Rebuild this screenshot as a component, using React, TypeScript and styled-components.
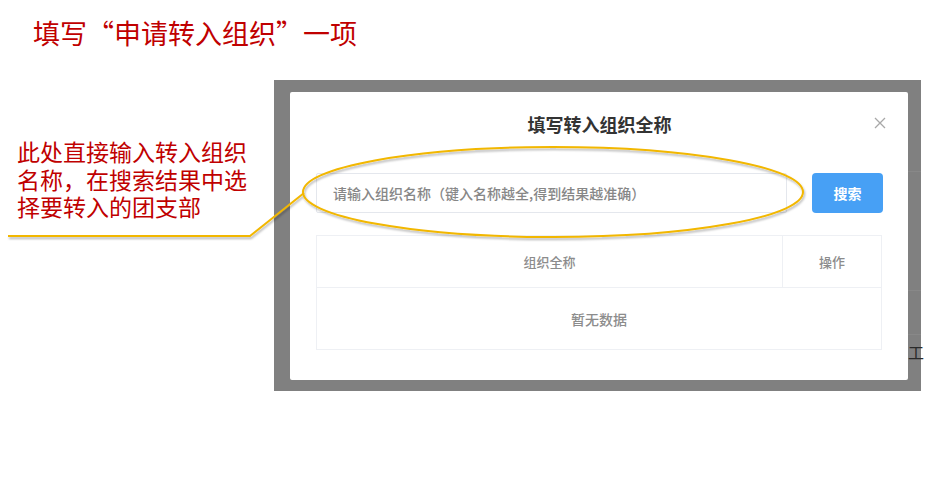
import styled, { createGlobalStyle } from 'styled-components';

const GlobalStyle = createGlobalStyle`
  html, body {
    margin: 0;
    padding: 0;
    background: #ffffff;
  }
  body {
    font-family: "Noto Sans CJK SC", "Noto Sans", sans-serif;
  }
`;

// slide page
const Page = styled.div`
  position: relative;
  width: 926px;
  height: 481px;
  overflow: hidden;
  background: #ffffff;
`;
const Heading = styled.h1`
  margin: 0;
  padding: 19px 0 0 33px;
  font-size: 27px;
  line-height: 28px;
  font-weight: 400;
  color: #c00000;
`;
const Body = styled.div`
  display: flex;
  margin-top: 33px;
`;
const Note = styled.div`
  width: 257px;
  padding: 58px 0 0 17px;
  display: flex;
  flex-direction: column;
`;
const NoteLine = styled.span`
  display: block;
  height: 27.5px;
  font-size: 23px;
  line-height: 27.5px;
  color: #c00000;
  white-space: nowrap;
`;

// screenshot of the dialog
const Shot = styled.div`
  position: relative;
  width: 647px;
  height: 311px;
  box-sizing: border-box;
  padding: 12px 13px 11px 16px;
  background: #808080;
  display: flex;
`;
// bits of the page behind the mask, peeking out on the right
const BackLine = styled.div<{ top: number }>`
  position: absolute;
  right: 0;
  top: ${(p) => p.top}px;
  width: 13px;
  height: 1px;
  background: #888888;
`;
const BackGlyph = styled.span`
  position: absolute;
  right: -3px;
  top: 264px;
  font-size: 16px;
  line-height: 16px;
  color: #2a2a2a;
`;
const Modal = styled.div`
  position: relative;
  z-index: 1;
  flex: 1;
  background: #ffffff;
  border-radius: 2px;
  padding: 0 25px 0 26px;
  display: flex;
  flex-direction: column;
`;
const ModalTitle = styled.div`
  padding-top: 21px;
  height: 22px;
  line-height: 22px;
  text-align: center;
  font-size: 18px;
  font-weight: 700;
  color: #333333;
`;
const Close = styled.span`
  position: absolute;
  top: 25px;
  right: 22px;
  width: 12px;
  height: 12px;
  display: flex;
`;
const SearchRow = styled.div`
  display: flex;
  gap: 25px;
  margin-top: 38px;
  height: 40px;
`;
const Input = styled.div`
  width: 471px;
  box-sizing: border-box;
  border: 1px solid #e4e7ed;
  border-radius: 2px;
  padding-left: 16px;
  display: flex;
  align-items: center;
  font-size: 14px;
  font-weight: 500;
  color: #878787;
`;
const Button = styled.div`
  width: 71px;
  border-radius: 4px;
  background: #47a0f5;
  color: #ffffff;
  font-size: 14px;
  font-weight: 700;
  display: flex;
  align-items: center;
  justify-content: center;
`;
const Table = styled.div`
  margin-top: 22px;
  width: 566px;
  border: 1px solid #eef0f4;
  display: grid;
  grid-template-columns: 466px 1fr;
  box-sizing: border-box;
`;
const Cell = styled.div<{ head?: boolean; last?: boolean }>`
  height: ${(p) => (p.head ? '51px' : '61px')};
  display: flex;
  align-items: center;
  justify-content: center;
  font-size: ${(p) => (p.head ? '13px' : '14px')};
  font-weight: 500;
  color: #8c8c8c;
  border-right: ${(p) => (p.last ? 'none' : '1px solid #eef0f4')};
  border-bottom: ${(p) => (p.head ? '1px solid #eef0f4' : 'none')};
`;
const Empty = styled(Cell)`
  grid-column: 1 / span 2;
  border-right: none;
`;

// callout drawn over the slide
const Overlay = styled.svg`
  position: absolute;
  left: 0;
  top: 0;
  z-index: 5;
  pointer-events: none;
`;

function App() {
  return (
    <>
      <GlobalStyle />
      <Page>
        <Heading>填写“申请转入组织”一项</Heading>
        <Body>
          <Note>
            <NoteLine>此处直接输入转入组织</NoteLine>
            <NoteLine>名称，在搜索结果中选</NoteLine>
            <NoteLine>择要转入的团支部</NoteLine>
          </Note>
          <Shot>
            <BackLine top={91} />
            <BackLine top={210} />
            <BackLine top={254} />
            <BackGlyph>工</BackGlyph>
            <Modal>
              <ModalTitle>填写转入组织全称</ModalTitle>
              <Close>
                <svg width="12" height="12" viewBox="0 0 12 12">
                  <path d="M1 1L11 11M11 1L1 11" stroke="#a8a8a8" strokeWidth="1.3" />
                </svg>
              </Close>
              <SearchRow>
                <Input>请输入组织名称（键入名称越全,得到结果越准确）</Input>
                <Button>搜索</Button>
              </SearchRow>
              <Table>
                <Cell head>组织全称</Cell>
                <Cell head last>操作</Cell>
                <Empty>暂无数据</Empty>
              </Table>
            </Modal>
          </Shot>
        </Body>
        <Overlay width="926" height="481" viewBox="0 0 926 481">
          <defs>
            <filter id="sh" x="-10%" y="-10%" width="120%" height="140%">
              <feDropShadow dx="1" dy="2" stdDeviation="1.2" floodColor="#000" floodOpacity="0.3" />
            </filter>
          </defs>
          <g filter="url(#sh)" fill="none" stroke="#f2b705" strokeWidth="2">
            <ellipse cx="553" cy="192" rx="250" ry="45" />
            <polyline points="8,236 250,236 304,193" />
          </g>
        </Overlay>
      </Page>
    </>
  );
}

export default App;
